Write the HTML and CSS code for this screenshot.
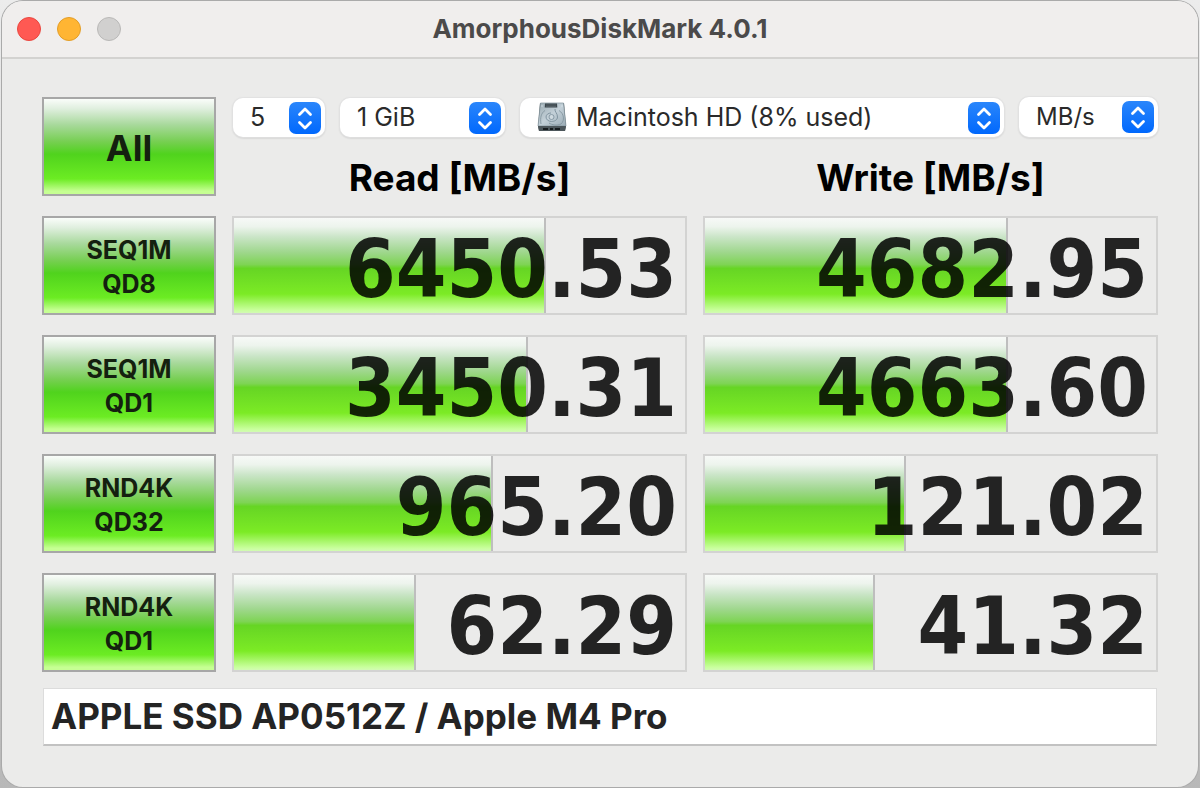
FILE: index.html
```
<!DOCTYPE html>
<html lang="en">
<head>
<meta charset="utf-8">
<title>AmorphousDiskMark 4.0.1</title>
<link rel="stylesheet" href="styles.css">
</head>
<body>
<svg width="0" height="0" class="defs" aria-hidden="true">
  <defs>
    <linearGradient id="blue" x1="0" y1="0" x2="0" y2="1"><stop offset="0" stop-color="#2a86fb"/><stop offset="1" stop-color="#0068fd"/></linearGradient>
    <linearGradient id="plate" x1="0" y1="0" x2="1" y2="1"><stop offset="0" stop-color="#9babb2"/><stop offset=".5" stop-color="#c3d0d8"/><stop offset="1" stop-color="#9aabb5"/></linearGradient>
    <symbol id="updown" viewBox="0 0 32 32">
      <rect width="32" height="32" rx="7" fill="url(#blue)"/>
      <path d="M10.500 12.500 16 7l5.500 5.500M10.500 20.500 16 26l5.500-5.500" fill="none" stroke="#fff" stroke-width="2.800" stroke-linecap="round" stroke-linejoin="round"/>
    </symbol>
  </defs>
</svg>
<main class="window">
  <header class="titlebar">
    <div class="lights">
      <button class="light close" aria-label="Close"></button>
      <button class="light minimize" aria-label="Minimize"></button>
      <button class="light zoom" aria-label="Zoom" disabled></button>
    </div>
    <h1 class="title">AmorphousDiskMark 4.0.1</h1>
  </header>
  <div class="content">
    <div class="bench">
      <button class="run all">All</button>
      <div class="top">
        <div class="options">
          <div class="popup count"><select aria-label="Test count"><option>5</option></select><svg class="arrows"><use href="#updown"/></svg></div>
          <div class="popup size"><select aria-label="Test size"><option>1 GiB</option></select><svg class="arrows"><use href="#updown"/></svg></div>
          <div class="popup disk">
            <svg class="drive" viewBox="0 0 30 30" aria-hidden="true">
              <path d="M3 1h24l2 23-1 5H2l-1-5z" fill="#4a5357"/>
              <path d="M3.500 1h23L29 24H1z" fill="url(#plate)" stroke="#83949c" stroke-width=".7"/>
              <path d="M8 1.500h12l.3 4H7.700z" fill="#3c474d"/><path d="M9 3h10M9 4.500h10" stroke="#6c787e" stroke-width=".5"/>
              <path d="M4 22C3 16 4 11 8 8.500M22 8.500c5 3 6 10 2 13.500-4 2-9 1-12-1" fill="none" stroke="#8496a0" stroke-width=".9"/>
              <path d="M18 7c-.5 3 2.500 4 2.500 8 0 3-3 4.500-6 4.500s-5.500-2-5.500-4.500 2.500-4 5-4" fill="none" stroke="#8295a1" stroke-width="1"/>
              <circle cx="14.500" cy="15" r="2.500" fill="#cfdae0" stroke="#8295a1" stroke-width=".9"/>
              <circle cx="5" cy="4" r=".7" fill="#dce5ea"/><circle cx="25" cy="4" r=".7" fill="#dce5ea"/>
              <path d="M1 24h28l-1 5H2z" fill="#4c565b"/><path d="M6 26h5v2H6zm7 0h3v2h-3zm5 0h5v2h-5z" fill="#171c1f"/>
            </svg>
            <select aria-label="Target disk"><option>Macintosh HD (8% used)</option></select><svg class="arrows"><use href="#updown"/></svg>
          </div>
          <div class="popup unit"><select aria-label="Unit"><option>MB/s</option></select><svg class="arrows"><use href="#updown"/></svg></div>
        </div>
        <div class="heads"><h2>Read [MB/s]</h2><h2>Write [MB/s]</h2></div>
      </div>

      <button class="run">SEQ1M<br>QD8</button>
      <div class="meter"><div class="fill" style="width:69.2%"></div><output class="value">6450.53</output></div>
      <div class="meter"><div class="fill" style="width:67.2%"></div><output class="value">4682.95</output></div>

      <button class="run">SEQ1M<br>QD1</button>
      <div class="meter"><div class="fill" style="width:65.2%"></div><output class="value">3450.31</output></div>
      <div class="meter"><div class="fill" style="width:67.2%"></div><output class="value">4663.60</output></div>

      <button class="run">RND4K<br>QD32</button>
      <div class="meter"><div class="fill" style="width:57.4%"></div><output class="value">965.20</output></div>
      <div class="meter"><div class="fill" style="width:44.5%"></div><output class="value">121.02</output></div>

      <button class="run">RND4K<br>QD1</button>
      <div class="meter"><div class="fill" style="width:40.4%"></div><output class="value">62.29</output></div>
      <div class="meter"><div class="fill" style="width:37.8%"></div><output class="value">41.32</output></div>
    </div>
    <input class="note" type="text" aria-label="Notes" value="APPLE SSD AP0512Z / Apple M4 Pro">
  </div>
</main>
</body>
</html>
```
FILE: styles.css
```
* { box-sizing: border-box; }
body {
  margin: 0;
  min-height: 100vh;
  padding: 1px 2px;
  display: flex;
  background: linear-gradient(#ececec, #b8b8b8);
  font-family: Inter, "Liberation Sans", sans-serif;
  color: #242424;
}
button, select, input { font: inherit; color: inherit; margin: 0; }
.defs { position: absolute; }
.window {
  flex: 1;
  background: #ebebea;
  border-radius: 21px;
  overflow: hidden;
  box-shadow: 0 0 0 1px #aaaaaa;
}
.titlebar {
  display: grid;
  grid-template-columns: 1fr auto 1fr;
  align-items: center;
  height: 58px;
  padding: 0 15px;
  background: #f0eeed;
  border-bottom: 2px solid #d3d2d0;
}
.lights { display: flex; gap: 16px; }
.light {
  width: 24px;
  height: 24px;
  padding: 0;
  border-radius: 50%;
  border: 1px solid;
}
.close { background: #ff5953; border-color: #e9473f; }
.minimize { background: #ffb533; border-color: #e29d28; }
.zoom { background: #d1d0cf; border-color: #b9b8b7; }
.title { margin: 0; font-size: 26px; line-height: 30px; font-weight: 700; color: #4b4a4a; }
.content { padding: 38px 40px 40px; }
.bench {
  display: grid;
  grid-template-columns: 174px 1fr 1fr;
  grid-auto-rows: 99px;
  gap: 20px 16px;
}
.top { grid-column: 2 / 4; }
.run {
  padding: 2px 0 0;
  border: 2px solid #a7a7a7;
  background: linear-gradient(#fafdfa 0%, #e0efdf 10%, #a8d99c 27%, #76cf51 45%, #50d31d 58%, #6cec23 84%, #c6ff93 97%, #c6ff93 100%);
  font-size: 25px;
  line-height: 34px;
  font-weight: 700;
  color: #14200f;
}
.all { font-size: 36px; }
.options { display: flex; gap: 15px; padding-left: 1px; height: 40px; }
.popup { position: relative; }
.popup select {
  appearance: none;
  width: 100%;
  height: 39px;
  margin-top: 1px;
  padding: 0 44px 2px 17px;
  border: 0;
  border-radius: 10px;
  background: #fff;
  box-shadow: 0 0 1px 1px #e2e2e2, 0 1px 2px #b4b4b4;
  font-size: 25px;
  color: #2a2a2a;
}
.count { width: 92px; }
.size { width: 165px; }
.disk { flex: 1; }
.unit { width: 139px; }
.popup.disk select { padding-left: 56px; }
.popup.unit select { height: 40px; margin-top: 0; font-size: 24px; }
.arrows {
  position: absolute;
  right: 4px;
  top: 5px;
  width: 32px;
  height: 32px;
  pointer-events: none;
}
.unit .arrows { top: 4px; }
.drive { position: absolute; left: 17px; top: 5px; width: 30px; height: 30px; pointer-events: none; }
.heads { display: grid; grid-template-columns: 1fr 1fr; gap: 16px; margin-top: 18px; }
.heads h2 { margin: 0; text-align: center; font-size: 37px; line-height: 46px; font-weight: 700; color: #000; }
.meter { display: grid; border: 2px solid #d3d3d2; }
.meter > * { grid-area: 1 / 1; }
.fill {
  border-right: 2px solid #bebebe;
  background: linear-gradient(#f7f9f7 0%, #edf4ed 9%, #cae5c7 20%, #9fd78d 36%, #7ed454 49%, #66d524 53%, #7ceb25 80%, #c9ff9d 97%, #d2fbb4 100%);
}
.value {
  align-self: center;
  justify-self: end;
  padding: 8px 8px 0 0;
  z-index: 1;
  font: bold 81px/87px "DejaVu Sans Condensed", "DejaVu Sans", sans-serif;
  color: rgba(0, 0, 0, .85);
}
.note {
  display: block;
  width: calc(100% - 2px);
  height: 58px;
  margin: 16px 1px 0;
  padding: 0 7px 2px;
  border: 1px solid #dcdcdc;
  border-bottom: 2px solid #c2c2c2;
  background: #fff;
  font-size: 35px;
  font-weight: 700;
}
```
